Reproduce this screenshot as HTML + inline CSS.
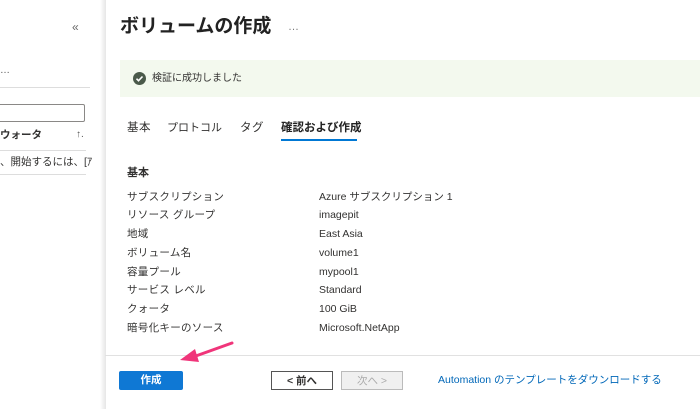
<!DOCTYPE html><html><head><meta charset="utf-8"><style>
*{margin:0;padding:0;box-sizing:border-box}
body{width:700px;height:409px;overflow:hidden;background:#fff;font-family:"Liberation Sans","Noto Sans CJK JP",sans-serif;color:#323130;position:relative}
.a{position:absolute;white-space:nowrap;line-height:14px}
.left{position:absolute;left:0;top:0;width:103px;height:409px;background:#fff}
.shadow{position:absolute;left:100px;top:0;width:6px;height:409px;background:linear-gradient(to right,#fff,#e6e6e6)}
.row{font-size:10.5px;color:#323130;letter-spacing:0.3px}
.v{font-size:10.5px;color:#323130}
.btn{position:absolute;height:19px;font-size:10.5px;text-align:center;line-height:18px}
</style></head><body>
<div class="left"></div><div class="shadow"></div>
<div class="a" style="left:72px;top:20px;font-size:12px;color:#666">«</div>
<div class="a" style="left:0;top:64px;font-size:10px;color:#555">…</div>
<div class="a" style="left:0;top:87px;width:90px;height:1px;background:#ddd"></div>
<div class="a" style="left:-2px;top:104px;width:87px;height:18px;border:1px solid #8a8886;border-radius:2px"></div>
<div class="a" style="left:0;top:128px;font-size:10.5px;font-weight:bold">ウォータ</div>
<div class="a" style="left:76px;top:128px;font-size:10px;color:#555">↑.</div>
<div class="a" style="left:0;top:150px;width:86px;height:1px;background:#ddd"></div>
<div class="a" style="left:0;top:155px;font-size:10.5px">、開始するには、[ｱ</div>
<div class="a" style="left:0;top:174px;width:86px;height:1px;background:#ddd"></div>

<div class="a" style="left:120px;top:15px;font-size:19px;line-height:24px;font-weight:bold;color:#222">ボリュームの作成</div>
<div class="a" style="left:288px;top:20px;font-size:11px;color:#777">…</div>
<div class="a" style="left:120px;top:60px;width:580px;height:37px;background:#f3f9ee"></div>
<svg class="a" style="left:133px;top:72px" width="13" height="13" viewBox="0 0 13 13"><circle cx="6.5" cy="6.5" r="6.5" fill="#4a5a4a"/><path d="M3.5 6.7l2 2 4-4.2" stroke="#fff" stroke-width="1.6" fill="none"/></svg>
<div class="a" style="left:152px;top:72px;font-size:10px">検証に成功しました</div>
<div class="a" style="left:127px;top:121px;font-size:11.5px;letter-spacing:0.5px">基本</div>
<div class="a" style="left:167px;top:121px;font-size:11px">プロトコル</div>
<div class="a" style="left:240px;top:121px;font-size:11.5px;letter-spacing:0.5px">タグ</div>
<div class="a" style="left:281px;top:121px;font-size:11.5px;font-weight:bold;color:#222">確認および作成</div>
<div class="a" style="left:281px;top:139px;width:76px;height:2px;background:#0078d4"></div>
<div class="a" style="left:127px;top:166px;font-size:11px;font-weight:bold">基本</div>
<div class="a row" style="left:127px;top:190px">サブスクリプション</div><div class="a v" style="left:319px;top:190px">Azure サブスクリプション 1</div>
<div class="a row" style="left:127px;top:208px">リソース グループ</div><div class="a v" style="left:319px;top:208px">imagepit</div>
<div class="a row" style="left:127px;top:227px">地域</div><div class="a v" style="left:319px;top:227px">East Asia</div>
<div class="a row" style="left:127px;top:246px">ボリューム名</div><div class="a v" style="left:319px;top:246px">volume1</div>
<div class="a row" style="left:127px;top:265px">容量プール</div><div class="a v" style="left:319px;top:265px">mypool1</div>
<div class="a row" style="left:127px;top:283px">サービス レベル</div><div class="a v" style="left:319px;top:283px">Standard</div>
<div class="a row" style="left:127px;top:302px">クォータ</div><div class="a v" style="left:319px;top:302px">100 GiB</div>
<div class="a row" style="left:127px;top:321px">暗号化キーのソース</div><div class="a v" style="left:319px;top:321px">Microsoft.NetApp</div>
<div class="a" style="left:105px;top:355px;width:595px;height:1px;background:#e1e1e1"></div>
<div class="btn" style="left:119px;top:371px;width:64px;background:#0f78d4;color:#fff;border-radius:2px;font-weight:bold">作成</div>
<div class="btn" style="left:271px;top:371px;width:62px;border:1px solid #555;font-weight:bold">&lt; 前へ</div>
<div class="btn" style="left:341px;top:371px;width:62px;border:1px solid #bbb;background:#f0f0f0;color:#aaa">次へ &gt;</div>
<div class="a" style="left:438px;top:373px;font-size:10.5px;color:#0067b8">Automation のテンプレートをダウンロードする</div>
<svg class="a" style="left:175px;top:338px" width="65" height="30" viewBox="0 0 65 30"><path d="M57 5 L18 19" stroke="#f0357a" stroke-width="3" stroke-linecap="round"/><path d="M5 22 L20 11 L24 24 Z" fill="#f0357a"/></svg>
</body></html>
